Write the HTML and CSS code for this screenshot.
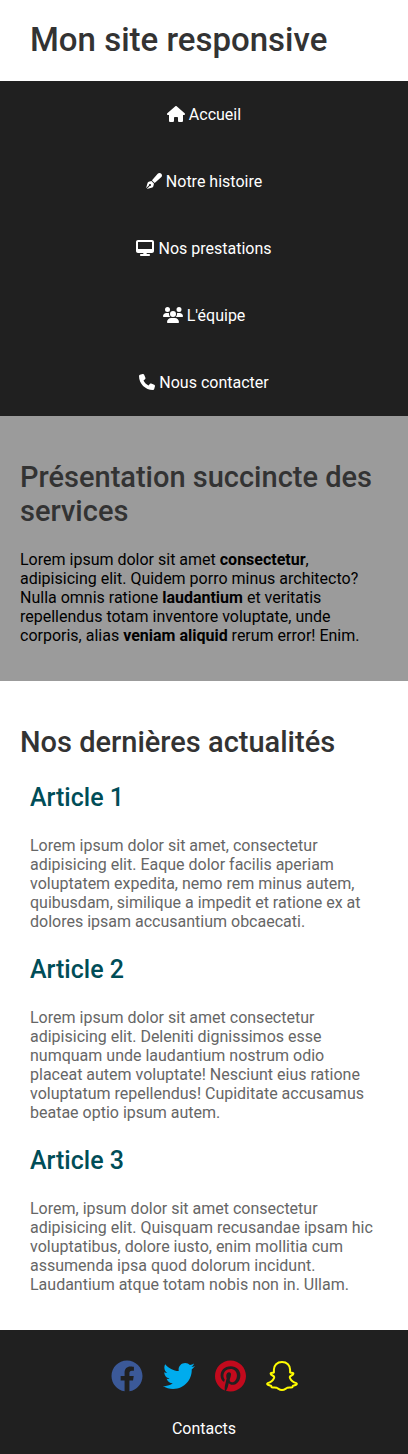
FILE: index.html
```html
<!DOCTYPE html>
<html lang="fr">
<head>
<meta charset="utf-8">
<meta name="viewport" content="width=device-width, initial-scale=1">
<title>Mon site responsive</title>
<link rel="stylesheet" href="styles.css">
</head>
<body>
<header class="site-header">
  <h1 class="site-title">Mon site responsive</h1>
</header>

<nav class="menu" aria-label="Menu principal">
  <a class="menu-link" href="#"><svg class="menu-icon" viewBox="0 0 576 512" aria-hidden="true"><path d="M575.8 255.5c0 18-15 32.1-32 32.1h-32l.7 160.2c0 2.7-.2 5.4-.5 8.1V472c0 22.1-17.9 40-40 40H456c-1.1 0-2.2 0-3.3-.1c-1.4 .1-2.8 .1-4.2 .1H416 392c-22.1 0-40-17.9-40-40V448 384c0-17.7-14.3-32-32-32H256c-17.7 0-32 14.3-32 32v64 24c0 22.1-17.9 40-40 40H160 128.1c-1.5 0-3-.1-4.5-.2c-1.2 .1-2.4 .2-3.6 .2H104c-22.1 0-40-17.9-40-40V360c0-.9 0-1.9 .1-2.8V287.6H32c-18 0-32-14-32-32.1c0-9 3-17 10-24L266.4 8c7-7 15-8 22-8s15 2 21 7L564.8 231.5c8 7 12 15 11 24z"/></svg>Accueil</a>
  <a class="menu-link" href="#"><svg class="menu-icon" viewBox="0 0 512 512" aria-hidden="true"><path d="M373.5 27.1C388.5 9.9 410.2 0 433 0c43.6 0 79 35.4 79 79c0 22.8-9.9 44.6-27.1 59.6L277.7 319l-10.3-10.3-64-64L193 234.3 373.5 27.1zM170.3 256.9l10.4 10.4 64 64 10.4 10.4-19.2 83.4c-3.9 17.1-16.9 30.7-33.8 35.4L24.4 510.3l95.4-95.4c2.6 .7 5.4 1.1 8.3 1.1c17.7 0 32-14.3 32-32s-14.3-32-32-32s-32 14.3-32 32c0 2.9 .4 5.6 1.1 8.3L1.7 487.6 51.5 310c4.7-16.9 18.3-29.9 35.4-33.8l83.4-19.2z"/></svg>Notre histoire</a>
  <a class="menu-link" href="#"><svg class="menu-icon" viewBox="0 0 576 512" aria-hidden="true"><path d="M64 0C28.7 0 0 28.7 0 64V352c0 35.3 28.7 64 64 64H240l-10.7 32H160c-17.7 0-32 14.3-32 32s14.3 32 32 32H416c17.7 0 32-14.3 32-32s-14.3-32-32-32H346.7L336 416H512c35.3 0 64-28.7 64-64V64c0-35.3-28.7-64-64-64H64zM512 64V288H64V64H512z"/></svg>Nos prestations</a>
  <a class="menu-link" href="#"><svg class="menu-icon" viewBox="0 0 640 512" aria-hidden="true"><path d="M144 0a80 80 0 1 1 0 160A80 80 0 1 1 144 0zM512 0a80 80 0 1 1 0 160A80 80 0 1 1 512 0zM0 298.7C0 239.8 47.8 192 106.7 192h42.7c15.9 0 31 3.5 44.6 9.7c-1.3 7.2-1.9 14.7-1.9 22.3c0 38.2 16.8 72.5 43.3 96c-.2 0-.4 0-.7 0H21.3C9.6 320 0 310.4 0 298.7zM405.3 320c-.2 0-.4 0-.7 0c26.6-23.5 43.3-57.8 43.3-96c0-7.6-.7-15-1.9-22.3c13.6-6.3 28.7-9.7 44.6-9.7h42.7C592.2 192 640 239.8 640 298.7c0 11.8-9.6 21.3-21.3 21.3H405.3zM224 224a96 96 0 1 1 192 0 96 96 0 1 1 -192 0zM128 485.3C128 411.7 187.7 352 261.3 352H378.7C452.3 352 512 411.7 512 485.3c0 14.7-11.9 26.7-26.7 26.7H154.7c-14.7 0-26.7-11.9-26.7-26.7z"/></svg>L'équipe</a>
  <a class="menu-link" href="#"><svg class="menu-icon" viewBox="0 0 512 512" aria-hidden="true"><path d="M164.9 24.6c-7.7-18.6-28-28.5-47.4-23.2l-88 24C12.1 30.2 0 46 0 64C0 311.4 200.6 512 448 512c18 0 33.8-12.1 38.6-29.5l24-88c5.3-19.4-4.6-39.7-23.2-47.4l-96-40c-16.3-6.8-35.2-2.1-46.3 11.6L304.7 368C234.3 334.7 177.3 277.7 144 207.3L193.3 167c13.7-11.2 18.4-30 11.6-46.3l-40-96z"/></svg>Nous contacter</a>
</nav>

<main>
  <section class="section intro">
    <h2 class="section-title">Présentation succincte des services</h2>
    <p class="text">Lorem ipsum dolor sit amet <strong>consectetur</strong>, adipisicing elit. Quidem porro minus architecto? Nulla omnis ratione <strong>laudantium</strong> et veritatis repellendus totam inventore voluptate, unde corporis, alias <strong>veniam aliquid</strong> rerum error! Enim.</p>
  </section>

  <section class="section news">
    <h2 class="section-title">Nos dernières actualités</h2>
    <article class="article">
      <h3 class="article-title">Article 1</h3>
      <p class="text">Lorem ipsum dolor sit amet, consectetur adipisicing elit. Eaque dolor facilis aperiam voluptatem expedita, nemo rem minus autem, quibusdam, similique a impedit et ratione ex at dolores ipsam accusantium obcaecati.</p>
    </article>
    <article class="article">
      <h3 class="article-title">Article 2</h3>
      <p class="text">Lorem ipsum dolor sit amet consectetur adipisicing elit. Deleniti dignissimos esse numquam unde laudantium nostrum odio placeat autem voluptate! Nesciunt eius ratione voluptatum repellendus! Cupiditate accusamus beatae optio ipsum autem.</p>
    </article>
    <article class="article">
      <h3 class="article-title">Article 3</h3>
      <p class="text">Lorem, ipsum dolor sit amet consectetur adipisicing elit. Quisquam recusandae ipsam hic voluptatibus, dolore iusto, enim mollitia cum assumenda ipsa quod dolorum incidunt. Laudantium atque totam nobis non in. Ullam.</p>
    </article>
  </section>
</main>

<footer class="site-footer">
  <div class="social">
    <a class="social-link facebook" href="#" aria-label="Facebook"><svg class="social-icon" viewBox="0 0 512 512" aria-hidden="true"><path d="M504 256C504 119 393 8 256 8S8 119 8 256c0 123.78 90.69 226.38 209.25 245V327.69h-63V256h63v-54.64c0-62.15 37-96.48 93.67-96.48 27.14 0 55.52 4.84 55.52 4.84v61h-31.28c-30.8 0-40.41 19.12-40.41 38.73V256h68.78l-11 71.69h-57.78V501C413.31 482.38 504 379.78 504 256z"/></svg></a>
    <a class="social-link twitter" href="#" aria-label="Twitter"><svg class="social-icon" viewBox="0 0 512 512" aria-hidden="true"><path d="M459.37 151.716c.325 4.548.325 9.097.325 13.645 0 138.72-105.583 298.558-298.558 298.558-59.452 0-114.68-17.219-161.137-47.106 8.447.974 16.568 1.299 25.34 1.299 49.055 0 94.213-16.568 130.274-44.832-46.132-.975-84.792-31.188-98.112-72.772 6.498.974 12.995 1.624 19.818 1.624 9.421 0 18.843-1.3 27.614-3.573-48.081-9.747-84.143-51.98-84.143-102.985v-1.299c13.969 7.797 30.214 12.67 47.431 13.319-28.264-18.843-46.781-51.005-46.781-87.391 0-19.492 5.197-37.36 14.294-52.954 51.655 63.675 129.3 105.258 216.365 109.807-1.624-7.797-2.599-15.918-2.599-24.04 0-57.828 46.782-104.934 104.934-104.934 30.213 0 57.502 12.67 76.67 33.137 23.715-4.548 46.456-13.32 66.599-25.34-7.798 24.366-24.366 44.833-46.132 57.827 21.117-2.273 41.584-8.122 60.426-16.243-14.292 20.791-32.161 39.308-52.628 54.253z"/></svg></a>
    <a class="social-link pinterest" href="#" aria-label="Pinterest"><svg class="social-icon" viewBox="0 0 496 512" aria-hidden="true"><path d="M496 256c0 137-111 248-248 248-25.6 0-50.2-3.9-73.4-11.1 10.1-16.5 25.2-43.5 30.8-65 3-11.6 15.4-59 15.4-59 8.1 15.4 31.7 28.5 56.8 28.5 74.8 0 128.7-68.8 128.7-154.3 0-81.9-66.9-143.2-152.9-143.2-107 0-163.9 71.8-163.9 150.1 0 36.4 19.4 81.7 50.3 96.1 4.7 2.2 7.2 1.2 8.3-3.3.8-3.4 5-20.3 6.9-28.1.6-2.5.3-4.7-1.7-7.1-10.1-12.5-18.3-35.3-18.3-56.6 0-54.7 41.4-107.6 112-107.6 60.9 0 103.6 41.5 103.6 100.9 0 67.1-33.9 113.6-78 113.6-24.3 0-42.6-20.1-36.7-44.8 7-29.5 20.5-61.3 20.5-82.6 0-19-10.2-34.9-31.4-34.9-24.9 0-44.9 25.7-44.9 60.2 0 22 7.4 36.8 7.4 36.8s-24.5 103.8-29 123.2c-5 21.4-3 51.6-.9 71.2C65.4 450.9 0 361.1 0 256 0 119 111 8 248 8s248 111 248 248z"/></svg></a>
    <a class="social-link snapchat" href="#" aria-label="Snapchat"><svg class="social-icon" viewBox="0 0 32 32" aria-hidden="true"><path fill="none" stroke="currentColor" stroke-width="2" stroke-linejoin="round" d="M16 2C11 2 7.900 5.300 7.900 9.600V12.600c-1.100.3-2.300-.4-3.100.5-.7 1.100.6 1.800 1.800 2.400 1.300.6 1.900 1.500 1.400 2.700-1.200 2.700-3.500 4.200-6.300 4.900-.7.3-.7 1 0 1.500 1.300.9 3 .8 3.400 1.300.4.6.3 1.300.9 1.500 1.100.3 2.800-.3 4.500.3 1.700.7 2.900 2.300 5.500 2.300s3.800-1.600 5.500-2.300c1.700-.6 3.400 0 4.500-.3.6-.2.5-.9.9-1.500.4-.5 2.100-.4 3.400-1.300.7-.5.7-1.200 0-1.500-2.800-.7-5.100-2.200-6.300-4.900-.5-1.200.1-2.100 1.400-2.700 1.200-.6 2.500-1.300 1.800-2.400-.8-.9-2-.2-3.100-.5V9.600C24.100 5.300 21 2 16 2z"/></svg></a>
  </div>
  <a class="contact-link" href="#">Contacts</a>
</footer>
</body>
</html>
```
FILE: styles.css
```css
body {
  margin: 0;
  background: #fff;
  color: #000;
  font-family: Roboto, "Liberation Sans", sans-serif;
  font-size: 16px;
  line-height: 19px;
}

h1,
h2,
h3 {
  font-weight: 500;
}

.site-header {
  padding: 21px 30px 22px;
}

.site-title {
  margin: 0;
  color: #333;
  font-size: 33px;
  line-height: 38px;
}

.menu {
  display: flex;
  flex-direction: column;
  background: #202020;
}

.menu-link {
  display: flex;
  align-items: center;
  justify-content: center;
  gap: 4px;
  padding: 24px;
  color: #fff;
  text-decoration: none;
}

.menu-icon {
  height: 16px;
  margin-bottom: 1px;
  fill: currentColor;
}

.section {
  display: flow-root;
  padding: 20px;
}

.section-title {
  margin: 24px 0 22px;
  color: #333;
  font-size: 29px;
  line-height: 34px;
}

.text {
  margin: 0 0 16px;
}

.intro {
  background: #9b9b9b;
}

.article {
  padding: 0 10px;
}

.article-title {
  margin: 24px 0;
  color: #004d57;
  font-size: 25px;
  line-height: 29px;
}

.article .text {
  color: #666;
}

.site-footer {
  display: flex;
  flex-direction: column;
  align-items: center;
  gap: 27px;
  padding: 30px 16px 16px;
  background: #202020;
}

.social {
  display: flex;
  gap: 20px;
}

.social-link {
  display: flex;
}

.social-icon {
  height: 32px;
  fill: currentColor;
}

.facebook {
  color: #3b5998;
}

.twitter {
  color: #00acee;
}

.pinterest {
  color: #c20a1d;
}

.snapchat {
  color: #fffc00;
}

.contact-link {
  color: #fff;
  text-decoration: none;
}
```
